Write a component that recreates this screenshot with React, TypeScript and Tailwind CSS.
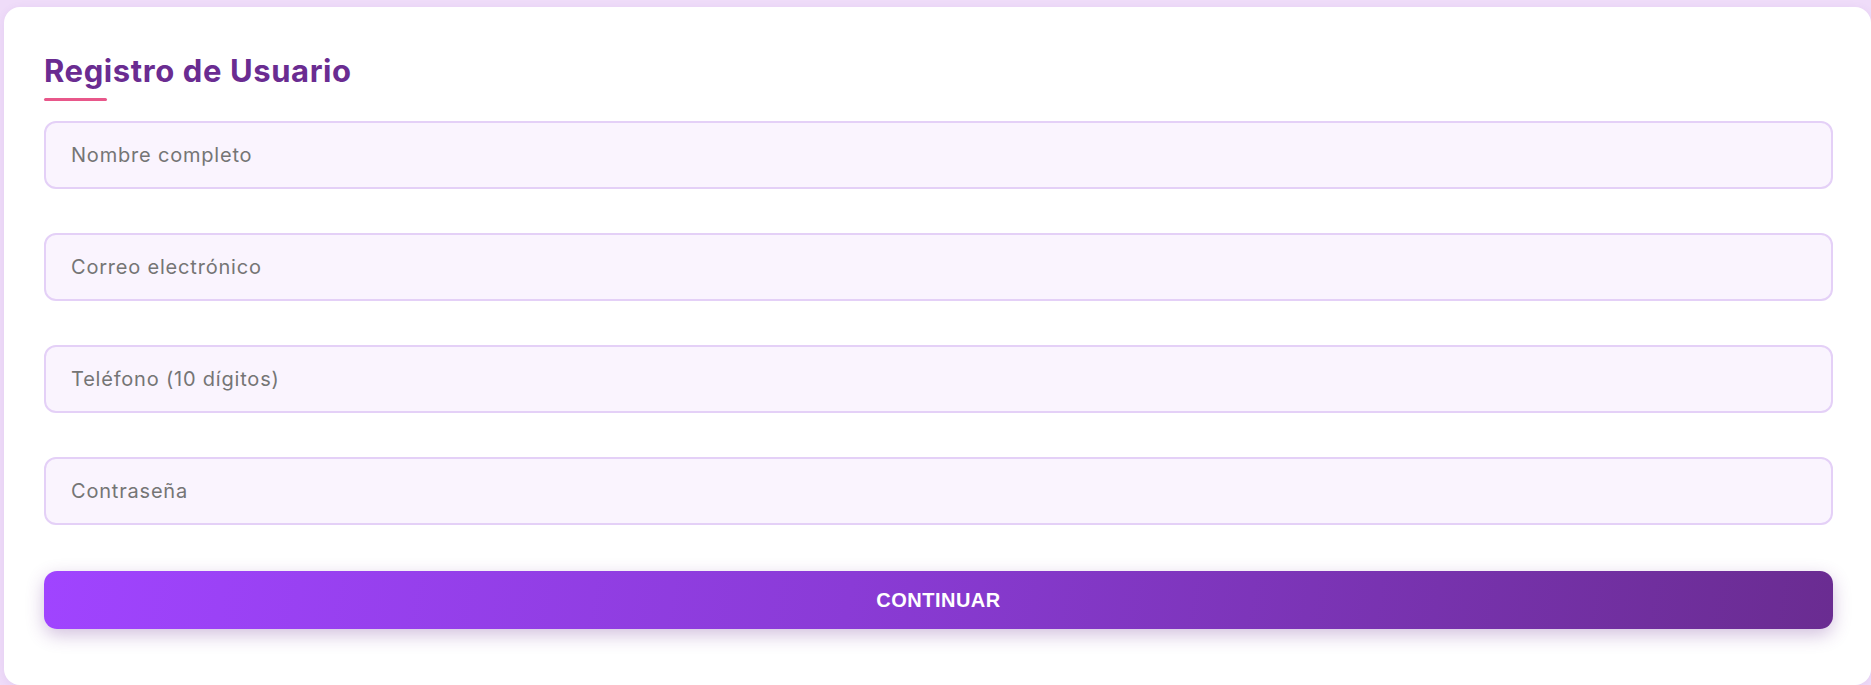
import React from "react";

const fields = [
  { ph: "Nombre completo", type: "text" },
  { ph: "Correo electrónico", type: "email" },
  { ph: "Teléfono (10 dígitos)", type: "tel" },
  { ph: "Contraseña", type: "password" },
];

export default function App() {
  return (
    <div className="min-h-[685px] w-full overflow-hidden bg-[#efdcf9] pl-[4px] pt-[7px]">
      <div className="h-[678px] w-[1867px] rounded-[16px] bg-white pl-[40px] pr-[38px] pt-[48px] shadow-[0_2px_10px_rgba(106,48,147,0.08)]">
        <h1 className="m-0 font-['Inter',sans-serif] text-[31px] font-bold leading-none tracking-[0.6px] text-[#6a2c91]">
          Registro de Usuario
        </h1>
        <div className="mt-[12px] h-[3px] w-[63px] rounded-full bg-[#e8578a]" />
        <form className="mt-[20px] flex flex-col gap-[44px]" onSubmit={(e) => e.preventDefault()}>
          {fields.map((f) => (
            <input
              key={f.ph}
              type={f.type}
              placeholder={f.ph}
              className="box-border h-[68px] w-full rounded-[12px] border-2 border-[#e4d0f7] bg-[#faf4fe] px-[25px] font-['Inter',sans-serif] text-[20px] tracking-[0.8px] text-[#555] outline-none placeholder:text-[#757575]"
            />
          ))}
          <button
            type="submit"
            className="mt-[2px] h-[58px] w-full rounded-[13px] bg-[linear-gradient(100deg,#a044ff_0%,#8a3bd6_45%,#6a2c91_100%)] font-['Liberation_Sans',Arial,sans-serif] text-[20px] font-bold tracking-[0.5px] text-white shadow-[0_6px_18px_rgba(106,48,147,0.3)]"
          >
            CONTINUAR
          </button>
        </form>
      </div>
    </div>
  );
}
